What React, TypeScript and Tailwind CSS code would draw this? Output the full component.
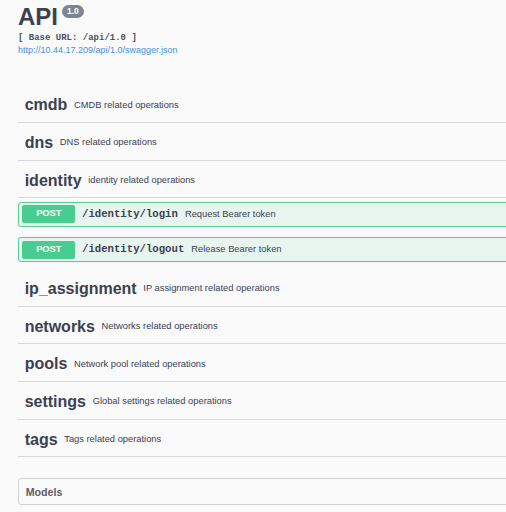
import React from 'react';

const tagsBefore = [
  { name: 'cmdb', desc: 'CMDB related operations' },
  { name: 'dns', desc: 'DNS related operations' },
  { name: 'identity', desc: 'identity related operations' },
];

const ops = [
  { method: 'POST', path: '/identity/login', desc: 'Request Bearer token' },
  { method: 'POST', path: '/identity/logout', desc: 'Release Bearer token' },
];

const tagsAfter = [
  { name: 'ip_assignment', desc: 'IP assignment related operations' },
  { name: 'networks', desc: 'Networks related operations' },
  { name: 'pools', desc: 'Network pool related operations' },
  { name: 'settings', desc: 'Global settings related operations' },
  { name: 'tags', desc: 'Tags related operations' },
];

function TagRow({ name, desc }: { name: string; desc: string }) {
  return (
    <div className="h-[34.33px] mb-[3.33px] flex items-center pl-[6.67px] border-b border-[#d6d8db]">
      <span className="text-[16px] font-bold leading-none">{name}</span>
      <span className="text-[9.33px] pl-[6.67px] leading-none">{desc}</span>
    </div>
  );
}

function OpRow({ method, path, desc }: { method: string; path: string; desc: string }) {
  return (
    <div className="h-[25.33px] mb-[10px] flex items-center pl-[3.33px] border border-[#5ccf9b] bg-[#e8f5ef] rounded-[3px] shadow-[0_0_2px_rgba(0,0,0,0.12)]">
      <span className="w-[53px] h-[18px] flex items-center justify-center bg-[#49cc90] text-white text-[9.33px] font-bold rounded-[2px]">
        {method}
      </span>
      <span className="pl-[6.67px] text-[10.67px] font-bold leading-none font-['Liberation_Mono',monospace]">
        {path}
      </span>
      <span className="pl-[7px] text-[9.33px] leading-none">{desc}</span>
    </div>
  );
}

export default function App() {
  return (
    <div className="w-[506px] h-[512px] overflow-hidden bg-[#fafafa] text-[#3b4151] font-['Liberation_Sans',Arial,sans-serif]">
      <div className="w-[540px] pl-[18px]">
        <div className="flex items-start">
          <h2 className="mt-[5px] text-[24px] leading-[24px] font-bold">API</h2>
          <span className="ml-[4px] mt-[5px] h-[13px] px-[5px] flex items-center rounded-full bg-[#7d8492] text-white text-[8.5px] font-bold">
            1.0
          </span>
        </div>
        <div className="mt-[4px] h-[10px] leading-[10px] text-[9px] font-bold text-[#4a505e] font-['Liberation_Mono',monospace]">
          [ Base URL: /api/1.0 ]
        </div>
        <div className="mt-[2px] h-[10px] leading-[10px] text-[9px] text-[#4990e2]">
          http://10.44.17.209/api/1.0/swagger.json
        </div>

        <div className="mt-[33.67px]">
          {tagsBefore.map(t => (
            <TagRow key={t.name} {...t} />
          ))}
          {ops.map(o => (
            <OpRow key={o.path} {...o} />
          ))}
          {tagsAfter.map(t => (
            <TagRow key={t.name} {...t} />
          ))}
        </div>

        <div className="mt-[20.67px] h-[27.33px] flex items-center pl-[6.67px] border border-[#cfd1d5] rounded-[3px]">
          <span className="text-[10.67px] font-bold text-[#606060]">Models</span>
        </div>
      </div>
    </div>
  );
}
